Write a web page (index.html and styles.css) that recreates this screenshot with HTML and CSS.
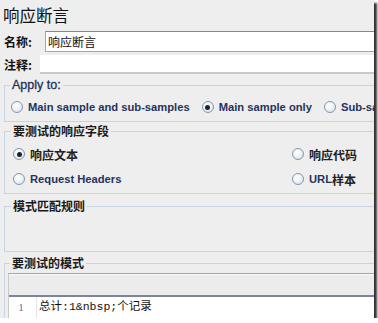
FILE: index.html
```html
<!DOCTYPE html>
<html>
<head>
<meta charset="utf-8">
<link rel="stylesheet" href="styles.css">
</head>
<body>
<div class="window">
  <div class="panel">
    <div class="title">响应断言</div>
    <div class="row name-row">
      <label class="lbl">名称:</label>
      <div class="input name-input">响应断言</div>
    </div>
    <div class="row comment-row">
      <label class="lbl">注释:</label>
      <div class="input comment-input"></div>
    </div>

    <fieldset class="box apply">
      <legend>Apply to:</legend>
      <div class="radios-inline">
        <span class="radio"><span class="dot"></span><span class="lat">Main sample and sub-samples</span></span>
        <span class="radio"><span class="dot on"></span><span class="lat">Main sample only</span></span>
        <span class="radio"><span class="dot"></span><span class="lat">Sub-samples only</span></span>
      </div>
    </fieldset>

    <fieldset class="box fields">
      <legend>要测试的响应字段</legend>
      <div class="grid2">
        <span class="radio"><span class="dot on"></span><span class="cjk">响应文本</span></span>
        <span class="radio"><span class="dot"></span><span class="cjk">响应代码</span></span>
        <span class="radio"><span class="dot"></span><span class="lat">Request Headers</span></span>
        <span class="radio"><span class="dot"></span><span class="lat">URL</span><span class="cjk">样本</span></span>
      </div>
    </fieldset>

    <fieldset class="box rules">
      <legend>模式匹配规则</legend>
    </fieldset>

    <fieldset class="box patterns">
      <legend>要测试的模式</legend>
      <div class="table">
        <div class="thead"></div>
        <div class="trow">
          <div class="gutter">1</div>
          <div class="code">总计:1&amp;nbsp;个记录</div>
        </div>
      </div>
    </fieldset>
  </div>
</div>
</body>
</html>
```
FILE: styles.css
```css
html, body {
  margin: 0;
  padding: 0;
  background: #ffffff;
}
.window {
  width: 374px;
  height: 318px;
  overflow: hidden;
  background: #eeeeee;
  box-shadow: 3px 3px 2px rgba(0, 0, 0, 0.8);
  font-family: "Noto Sans CJK SC", sans-serif;
  color: #111;
}
.panel {
  width: 600px;
  padding: 0 0 0 4px;
}
.title {
  font-size: 16.5px;
  line-height: 26px;
  height: 26px;
  padding: 2px 0 0 0;
  margin-left: -1px;
  color: #111;
}
.row {
  display: flex;
  align-items: center;
}
.lbl {
  font-size: 12px;
  font-weight: bold;
  color: #111;
}
.name-row {
  margin-top: 3px;
  height: 21px;
}
.name-row .lbl { width: 41px; }
.name-input {
  flex: 1;
  height: 19px;
  border: 1px solid #9aa7b8;
  border-top-color: #7b8aa0;
  background: #fff;
  font-size: 12px;
  line-height: 19px;
  padding-left: 2px;
}
.comment-row {
  margin-top: 3px;
  height: 19px;
}
.comment-row .lbl { width: 36px; }
.comment-input {
  flex: 1;
  height: 17px;
  background: #fff;
  border-bottom: 2px solid #c9c9c9;
}
.box {
  margin: 0;
  border: 1px solid #c6d4e4;
  padding: 0 4px;
  min-width: 0;
}
.box legend {
  font-size: 12px;
  font-weight: bold;
  line-height: 16px;
  padding: 0 2px;
  margin-left: 2px;
  color: #1a1a1a;
}
.apply {
  margin-top: 3px;
  padding-top: 4px;
  padding-bottom: 4px;
}
.apply legend {
  font-family: "Liberation Sans", sans-serif;
  font-size: 12.5px;
  font-weight: normal;
  color: #1f2f55;
  -webkit-text-stroke: 0.3px #1f2f55;
  margin-left: 1px;
}
.radios-inline {
  display: flex;
  gap: 12px;
  height: 20px;
  align-items: center;
  padding-left: 2px;
}
.radio {
  display: inline-flex;
  align-items: center;
  height: 20px;
  white-space: nowrap;
}
.dot {
  width: 10px;
  height: 10px;
  border-radius: 50%;
  border: 1px solid #8597ad;
  background: radial-gradient(circle at 40% 35%, #ffffff 0%, #eef3f8 45%, #cfdbe7 100%);
  margin-right: 5px;
  position: relative;
  flex: none;
}
.dot.on::after {
  content: "";
  position: absolute;
  left: 2.5px;
  top: 2.5px;
  width: 5px;
  height: 5px;
  border-radius: 50%;
  background: #222;
}
.lat {
  font-family: "Liberation Sans", sans-serif;
  font-weight: bold;
  font-size: 11.2px;
  color: #1f3360;
}
.cjk {
  font-size: 12px;
  font-weight: bold;
  color: #222;
}
.fields {
  margin-top: 1px;
  padding-top: 5px;
  padding-bottom: 4px;
}
.grid2 {
  display: grid;
  grid-template-columns: 279px 1fr;
  row-gap: 5px;
  padding-left: 4px;
}
.rules {
  margin-top: 4px;
  height: 54px;
  box-sizing: border-box;
}
.patterns {
  margin-top: 3px;
  padding: 2px 0 0 3px;
  height: 200px;
}
.table {
  border-top: 1px solid #a2a6ac;
  border-left: 1px solid #c8c8c8;
}
.thead {
  height: 20px;
  background: #ececec;
  border-top: 1px solid #fafafa;
  border-bottom: 2px solid #78859a;
}
.trow {
  display: flex;
  background: #fff;
  height: 40px;
}
.gutter {
  width: 24px;
  border-right: 1px solid #e4e4e4;
  font-family: "Liberation Serif", serif;
  font-size: 11px;
  color: #6c6c94;
  text-align: center;
  line-height: 20px;
  padding-right: 3px;
}
.code {
  padding-left: 2px;
  font-family: "Liberation Mono", "Noto Sans CJK SC", monospace;
  font-size: 11.5px;
  line-height: 20px;
  color: #111;
}
```
